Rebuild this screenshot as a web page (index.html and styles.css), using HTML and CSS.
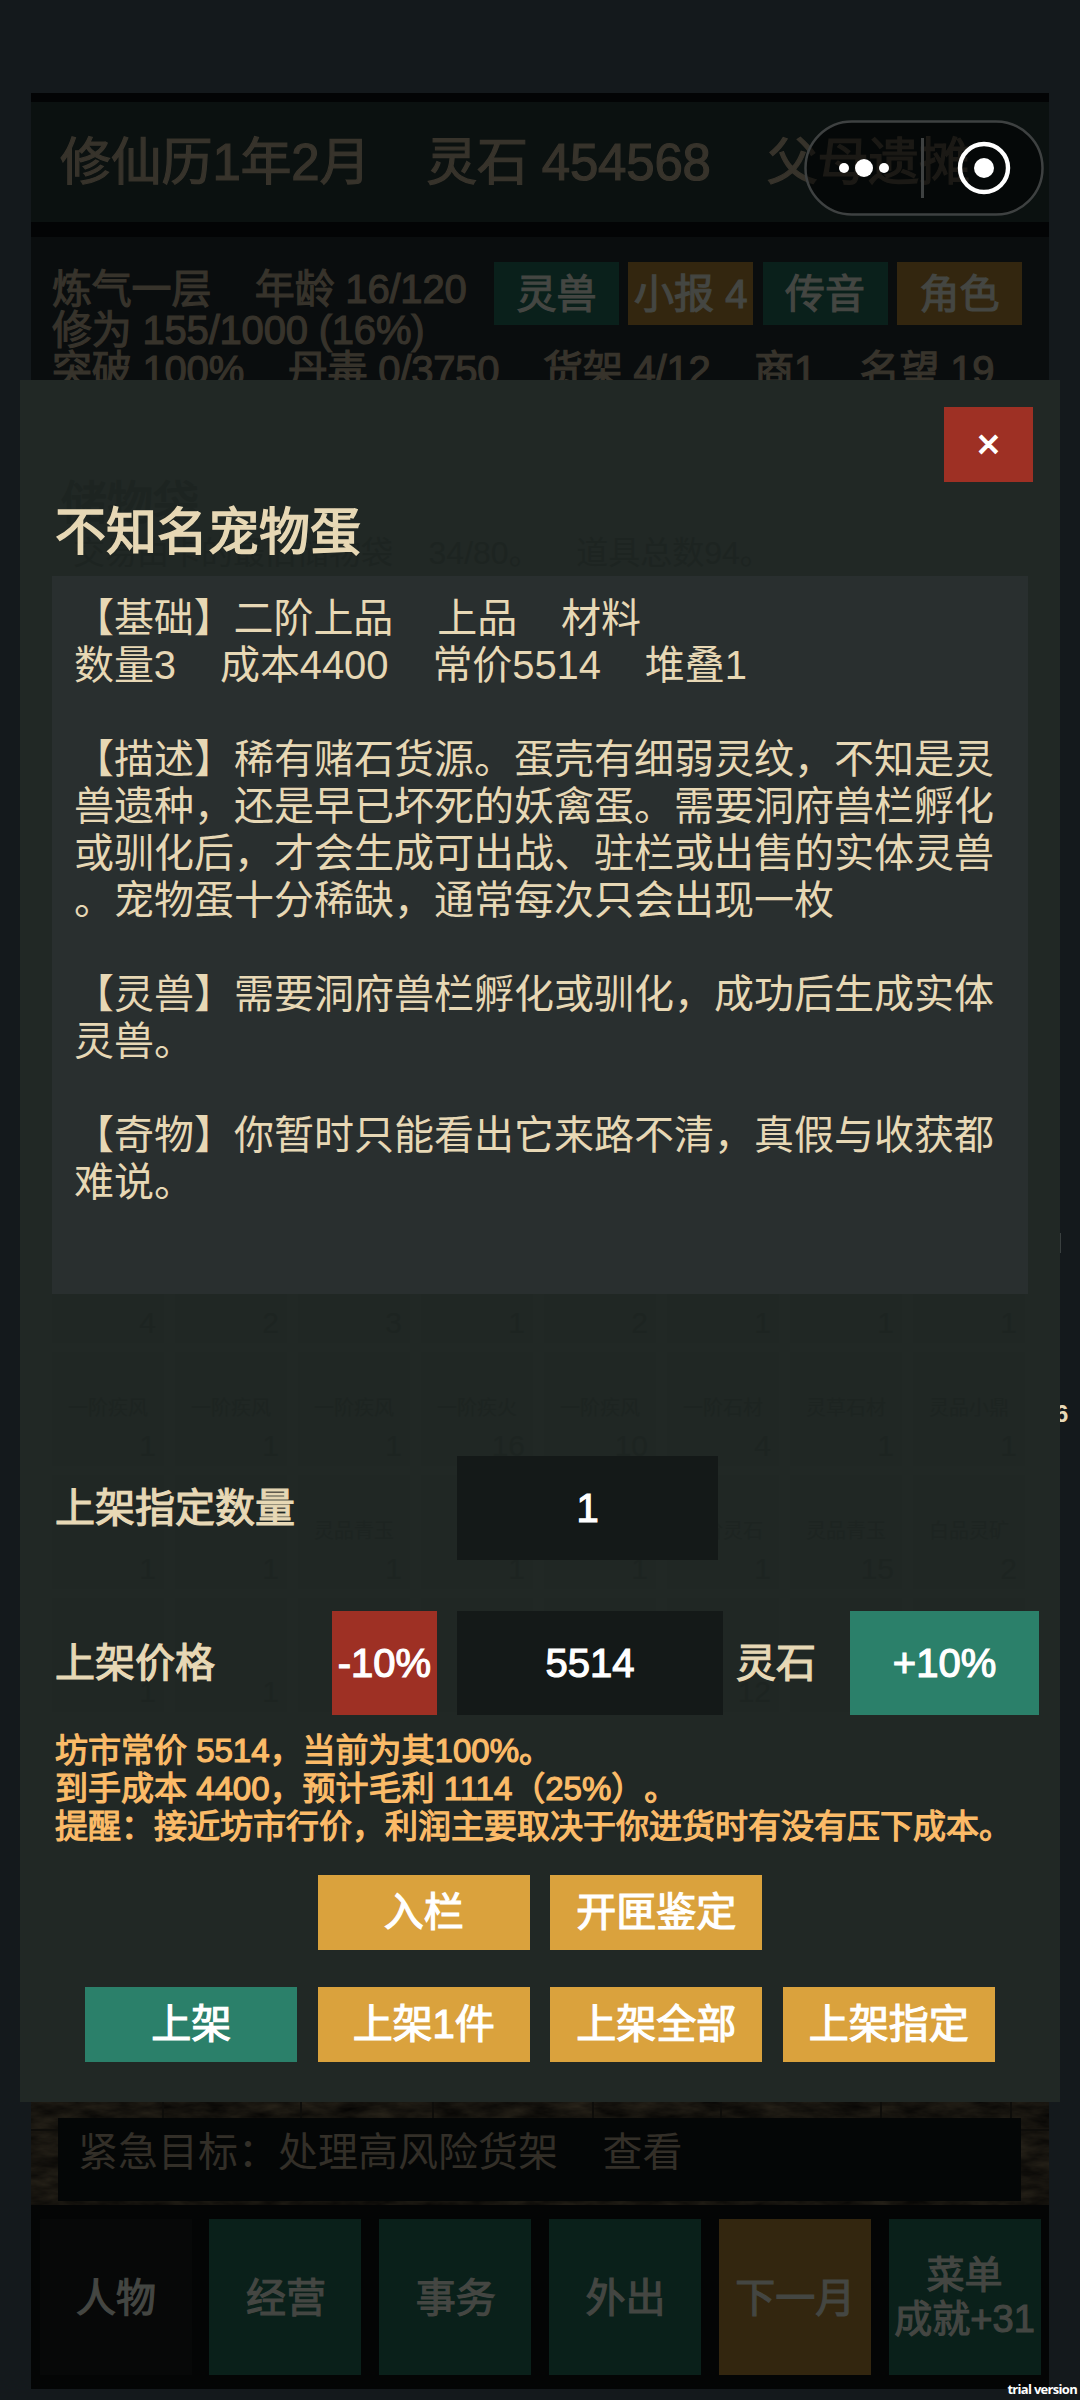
FILE: index.html
```html
<!DOCTYPE html>
<html lang="zh-CN">
<head>
<meta charset="utf-8">
<title>不知名宠物蛋</title>
<link rel="stylesheet" href="styles.css">
</head>
<body>
<div class="screen">
  <main class="game">
    <header class="topbar">修仙历1年2月    灵石 454568    父母遗摊</header>
    <section class="status">
      <div class="status-text">
        <div>炼气一层    年龄 16/120</div>
        <div>修为 155/1000 (16%)</div>
        <div>突破 100%    丹毒 0/3750    货架 4/12    商1    名望 19</div>
      </div>
      <div class="tabs">
        <div class="tab">灵兽</div>
        <div class="tab gold">小报 4</div>
        <div class="tab">传音</div>
        <div class="tab gold">角色</div>
      </div>
    </section>
    <section class="scene">
      <svg class="bricks" width="1018" height="104">
        <filter id="stone" x="0" y="0" width="100%" height="100%" color-interpolation-filters="sRGB">
          <feTurbulence type="fractalNoise" baseFrequency="0.03 0.09" numOctaves="4" seed="7"/>
          <feColorMatrix values="0.17 0 0 0 0  0.15 0 0 0 0  0.11 0 0 0 0  0 0 0 0 1"/>
        </filter>
        <rect width="1018" height="104" filter="url(#stone)"/>
        <path d="M0 29H1018M132 0V26M270 0V26M402 0V26M562 0V26M690 0V26M850 0V26M980 0V26" stroke="#0e0d0a" stroke-width="2" fill="none"/>
      </svg>
      <div class="toast">紧急目标：处理高风险货架    查看</div>
    </section>
    <nav class="nav">
      <div class="nav-item plain">人物</div>
      <div class="nav-item">经营</div>
      <div class="nav-item">事务</div>
      <div class="nav-item">外出</div>
      <div class="nav-item gold">下一月</div>
      <div class="nav-item menu">菜单<br>成就+31</div>
    </nav>
  </main>

  <span class="stray-number">6</span>
  <span class="stray-mark"></span>

  <section class="modal">
    <div class="ghost">
      <div class="ghost-title">储物袋</div>
      <div class="ghost-sub">交易由卡的最旧储物袋    34/80。    道具总数94。</div>
      <div class="ghost-grid">
        <div><b>4</b></div><div><b>2</b></div><div><b>3</b></div><div><b>1</b></div><div><b>2</b></div><div><b>1</b></div><div><b>1</b></div><div><b>1</b></div>
        <div>一阶疾风<b>1</b></div><div>一阶疾风<b>1</b></div><div>一阶疾风<b>1</b></div><div>一阶疾火<b>16</b></div><div>一阶疾风<b>10</b></div><div>一阶石材<b>4</b></div><div>灵草石材<b>1</b></div><div>灵品小鼎<b>1</b></div>
        <div><b>1</b></div><div><b>1</b></div><div>灵品青玉<b>1</b></div><div><b>1</b></div><div><b>1</b></div><div>一阶灵石<b>1</b></div><div>灵品青玉<b>15</b></div><div>白品灵矿<b>2</b></div>
        <div><b>1</b></div><div><b>1</b></div><div></div><div></div><div></div><div><b>12</b></div><div></div><div></div>
      </div>
    </div>

    <div class="modal-top"><button class="close">×</button></div>
    <h1 class="title">不知名宠物蛋</h1>
    <div class="detail">
      <p>【基础】二阶上品    上品    材料<br>数量3    成本4400    常价5514    堆叠1</p>
      <p>【描述】稀有赌石货源。蛋壳有细弱灵纹，不知是灵<br>兽遗种，还是早已坏死的妖禽蛋。需要洞府兽栏孵化<br>或驯化后，才会生成可出战、驻栏或出售的实体灵兽<br>。宠物蛋十分稀缺，通常每次只会出现一枚</p>
      <p>【灵兽】需要洞府兽栏孵化或驯化，成功后生成实体<br>灵兽。</p>
      <p>【奇物】你暂时只能看出它来路不清，真假与收获都<br>难说。</p>
    </div>
    <div class="row quantity">
      <span class="label">上架指定数量</span>
      <div class="field">1</div>
    </div>
    <div class="row price">
      <span class="label">上架价格</span>
      <button class="minus">-10%</button>
      <div class="field">5514</div>
      <span class="unit">灵石</span>
      <button class="plus">+10%</button>
    </div>
    <div class="hint">坊市常价 5514，当前为其100%。<br>到手成本 4400，预计毛利 1114（25%）。<br>提醒：接近坊市行价，利润主要取决于你进货时有没有压下成本。</div>
    <div class="actions first">
      <button>入栏</button>
      <button>开匣鉴定</button>
    </div>
    <div class="actions">
      <button class="green">上架</button>
      <button>上架1件</button>
      <button>上架全部</button>
      <button>上架指定</button>
    </div>
  </section>

  <svg class="capsule" width="240" height="96" viewBox="0 0 240 96">
    <rect x="1.5" y="1.5" width="237" height="93" rx="46.5" fill="#000" fill-opacity=".5" stroke="#3e4141" stroke-width="2.5"/>
    <circle cx="40" cy="48" r="5" fill="#fff"/>
    <circle cx="60" cy="48" r="9" fill="#fff"/>
    <circle cx="80" cy="48" r="5" fill="#fff"/>
    <path d="M118.5 18v60" stroke="#3e4141" stroke-width="3"/>
    <circle cx="180" cy="48" r="24" fill="none" stroke="#fff" stroke-width="4.4"/>
    <circle cx="180" cy="48" r="10" fill="#fff"/>
  </svg>
  <span class="trial">trial version</span>
</div>
</body>
</html>
```
FILE: styles.css
```css
* { box-sizing: border-box; margin: 0; padding: 0; }

body {
  background: #14191c;
  font-family: "Liberation Sans", "Noto Sans CJK SC", sans-serif;
  font-size: 40px;
  text-spacing-trim: space-all;
  white-space: nowrap;
}

button {
  border: 0;
  font: inherit;
  color: #fff;
  -webkit-text-stroke: inherit;
}

.screen {
  position: relative;
  width: 1080px;
  height: 2400px;
  overflow: hidden;
}

/* dimmed game page */
.game {
  display: flex;
  flex-direction: column;
  width: 1018px;
  height: 2296px;
  margin: 93px 0 0 31px;
  padding-top: 9px;
  background: #030405;
  color: #37332b;
  -webkit-text-stroke: 1.2px currentColor;
}

.topbar {
  height: 120px;
  padding-left: 29px;
  background: #0b1110;
  font-size: 51px;
  letter-spacing: -0.2px;
  line-height: 122px;
  white-space: pre;
}

.status {
  display: flex;
  align-items: flex-start;
  height: 143px;
  margin-top: 15px;
  padding: 25px 0 0 21px;
  background: #0a0d0e;
}

.status-text {
  width: 442px;
  padding-top: 7px;
  letter-spacing: -0.2px;
  line-height: 40.5px;
}

.status-text div { height: 40.5px; white-space: pre; }

.tabs { display: flex; gap: 9.3px; }

.tab {
  width: 125px;
  height: 63px;
  background: #0a201b;
  color: #444642;
  line-height: 65px;
  text-align: center;
}

.tab.gold, .nav-item.gold { background: #33260f; }

.scene {
  flex: 1;
  display: flex;
  align-items: flex-end;
  position: relative;
  padding: 0 28px 4px;
}

.bricks { position: absolute; left: 0; bottom: 0; }

.toast {
  position: relative;
  width: 963px;
  height: 83px;
  margin-left: -1px;
  padding-left: 20px;
  background: #040606;
  color: #332f28;
  line-height: 68px;
  white-space: pre;
  -webkit-text-stroke: 0;
}

.nav {
  display: grid;
  grid-template-columns: repeat(6, 152px);
  gap: 17.8px;
  height: 184px;
  padding: 14px 0 14px 8.6px;
  background: #040505;
}

.nav-item {
  display: flex;
  align-items: center;
  justify-content: center;
  padding: 0 0 4px 1px;
  background: #0a201a;
  color: #444642;
  text-align: center;
}

.nav-item.plain { background: #070808; }
.nav-item.menu { padding: 0; font-size: 38px; line-height: 44px; }

/* leftovers of the page that stick out behind the dialog */
.stray-number {
  position: absolute;
  left: 1055px;
  top: 1400px;
  color: #e7d9b8;
  font-size: 24px;
  font-weight: 700;
  line-height: 28px;
}

.stray-mark {
  position: absolute;
  left: 1060px;
  top: 1233px;
  width: 1px;
  height: 20px;
  background: #3a4040;
}

/* item dialog */
.modal {
  position: absolute;
  left: 20px;
  top: 380px;
  width: 1040px;
  height: 1722px;
  display: flex;
  flex-direction: column;
  background: #212825;
  color: #e7d8b5;
  -webkit-text-stroke: 1.2px currentColor;
}

.modal > :not(.ghost) { position: relative; flex-shrink: 0; }

.modal-top {
  display: flex;
  justify-content: flex-end;
  height: 102px;
  padding: 27px 27px 0 0;
}

.close { width: 89px; height: 75px; background: #9e3024; line-height: 75px; }

.title {
  height: 94px;
  padding-left: 35px;
  font-size: 51px;
  font-weight: 400;
  line-height: 101px;
  -webkit-text-stroke-width: 1.5px;
}

.detail {
  display: flex;
  flex-direction: column;
  gap: 47px;
  width: 976px;
  height: 718px;
  margin-left: 32px;
  padding: 19px 0 0 22px;
  background: #292f2f;
  line-height: 47px;
  -webkit-text-stroke: 0;
}

.detail p { white-space: pre; }
.detail p:first-child { letter-spacing: -0.1px; }

.row { display: flex; height: 104px; padding-left: 35px; line-height: 104px; text-align: center; }
.label { text-align: left; }
.quantity { margin-top: 162px; }
.quantity .label { width: 402px; }
.quantity .field { width: 261px; }
.price { margin-top: 51px; }
.price .label { width: 277px; }
.price .field { width: 266px; }

.field { background: #141918; color: #fff; }
.minus { width: 105px; margin-right: 20px; background: #9e3024; }
.unit { width: 127px; padding-left: 13px; text-align: left; }
.plus { width: 189px; background: #2b806a; }

.hint {
  height: 160px;
  padding: 17px 0 0 35px;
  color: #fbbb68;
  font-size: 33px;
  line-height: 38px;
}

.actions { display: flex; justify-content: center; gap: 20.5px; }
.actions.first { margin-bottom: 37px; }
.actions button { width: 212px; height: 75px; background: #daa23d; line-height: 75px; }
.actions .green { background: #2b806a; }

/* faint inventory showing through the dialog */
.ghost {
  position: absolute;
  inset: 0;
  color: #1d2421;
  overflow: hidden;
}

.ghost-title { padding: 98px 0 0 41px; font-size: 46px; line-height: 50px; }
.ghost-sub { padding: 0 0 0 53px; font-size: 32px; line-height: 50px; white-space: pre; -webkit-text-stroke: 0; }

.ghost-grid {
  display: grid;
  grid-template-columns: repeat(8, 112px);
  grid-auto-rows: 114px;
  gap: 9px 11px;
  padding: 651px 0 0 32px;
}

.ghost-grid div {
  display: flex;
  flex-direction: column;
  justify-content: flex-end;
  background: #202724;
  font-size: 20px;
  line-height: 24px;
  text-align: center;
  -webkit-text-stroke: 0;
}

.ghost-grid b {
  padding: 10px 8px 4px 0;
  font-size: 30px;
  font-weight: 400;
  line-height: 32px;
  text-align: right;
}

.capsule { position: absolute; left: 804px; top: 120px; }

.trial {
  position: absolute;
  right: 3px;
  top: 2380px;
  color: #fff;
  font: 700 13px/18px "Open Sans", sans-serif;
  letter-spacing: -0.7px;
}
```
